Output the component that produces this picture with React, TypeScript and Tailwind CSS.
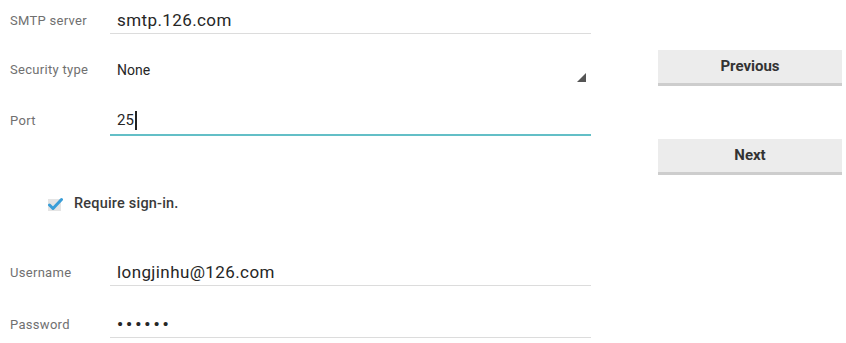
import React from "react";

const FONT = { fontFamily: "Roboto, 'Noto Sans', sans-serif" };

function Field({
  label,
  value,
  className,
  line = "border-b border-[#dcdcdc]",
  children,
}: {
  label: string;
  value?: React.ReactNode;
  className?: string;
  line?: string;
  children?: React.ReactNode;
}) {
  return (
    <div className={`flex items-stretch ${className ?? ""}`}>
      <div className="flex w-[110px] shrink-0 items-center pl-[10px] text-[13px] tracking-[0.3px] text-[#707070]">
        {label}
      </div>
      <div className={`relative flex w-[481px] items-center pl-[7px] text-[17px] tracking-[0.4px] text-[#262626] ${line}`}>
        {value}
        {children}
      </div>
    </div>
  );
}

export default function App() {
  return (
    <div className="flex h-[343px] w-[846px] bg-white" style={FONT}>
      {/* form column */}
      <div className="flex w-[640px] flex-col">
        <Field label="SMTP server" value="smtp.126.com" className="mt-[8px] h-[26px]" />
        <Field
          label="Security type"
          value={<span className="text-[14px] tracking-normal">None</span>}
          line=""
          className="mt-[23px] h-[26px]"
        >
          <svg className="absolute bottom-[1px] right-[5px]" width="9" height="9" viewBox="0 0 9 9">
            <polygon points="9,0 9,9 0,9" fill="#555" />
          </svg>
        </Field>
        <Field
          label="Port"
          value={
            <span className="flex items-center text-[15px] tracking-normal">
              25<span className="ml-px inline-block h-[19px] w-[2px] bg-[#222]" />
            </span>
          }
          line="border-b-2 border-[#63bfc7]"
          className="mt-[23px] h-[30px]"
        />

        <div className="mt-[58px] flex h-[20px] items-center pl-[47px]">
          <svg width="16" height="15" viewBox="0 0 16 15">
            <rect x="1" y="2" width="13" height="12" fill="#e4e4e4" />
            <path d="M2.5 8 L6 11.5 L14.5 2.5" stroke="#3a9ed8" strokeWidth="3" fill="none" strokeLinecap="round" strokeLinejoin="round" />
          </svg>
          <span className="ml-[11px] text-[14.5px] font-medium tracking-[0.2px] text-[#3a3a3a]">Require sign-in.</span>
        </div>

        <Field label="Username" value="longjinhu@126.com" className="mt-[46px] h-[26px]" />
        <Field
          label="Password"
          value={<span className="text-[17px] font-bold tracking-[3px]">••••••</span>}
          className="mt-[26px] h-[26px]"
        />
      </div>

      {/* buttons */}
      <div className="flex flex-col pl-[18px]">
        <button className="mt-[50px] h-[36px] w-[184px] border-b-[3px] border-[#cdcdcd] bg-[#ececec] text-[15px] font-bold text-[#333]">
          Previous
        </button>
        <button className="mt-[53px] h-[36px] w-[184px] border-b-[3px] border-[#cdcdcd] bg-[#ececec] text-[15px] font-bold text-[#333]">
          Next
        </button>
      </div>
    </div>
  );
}
